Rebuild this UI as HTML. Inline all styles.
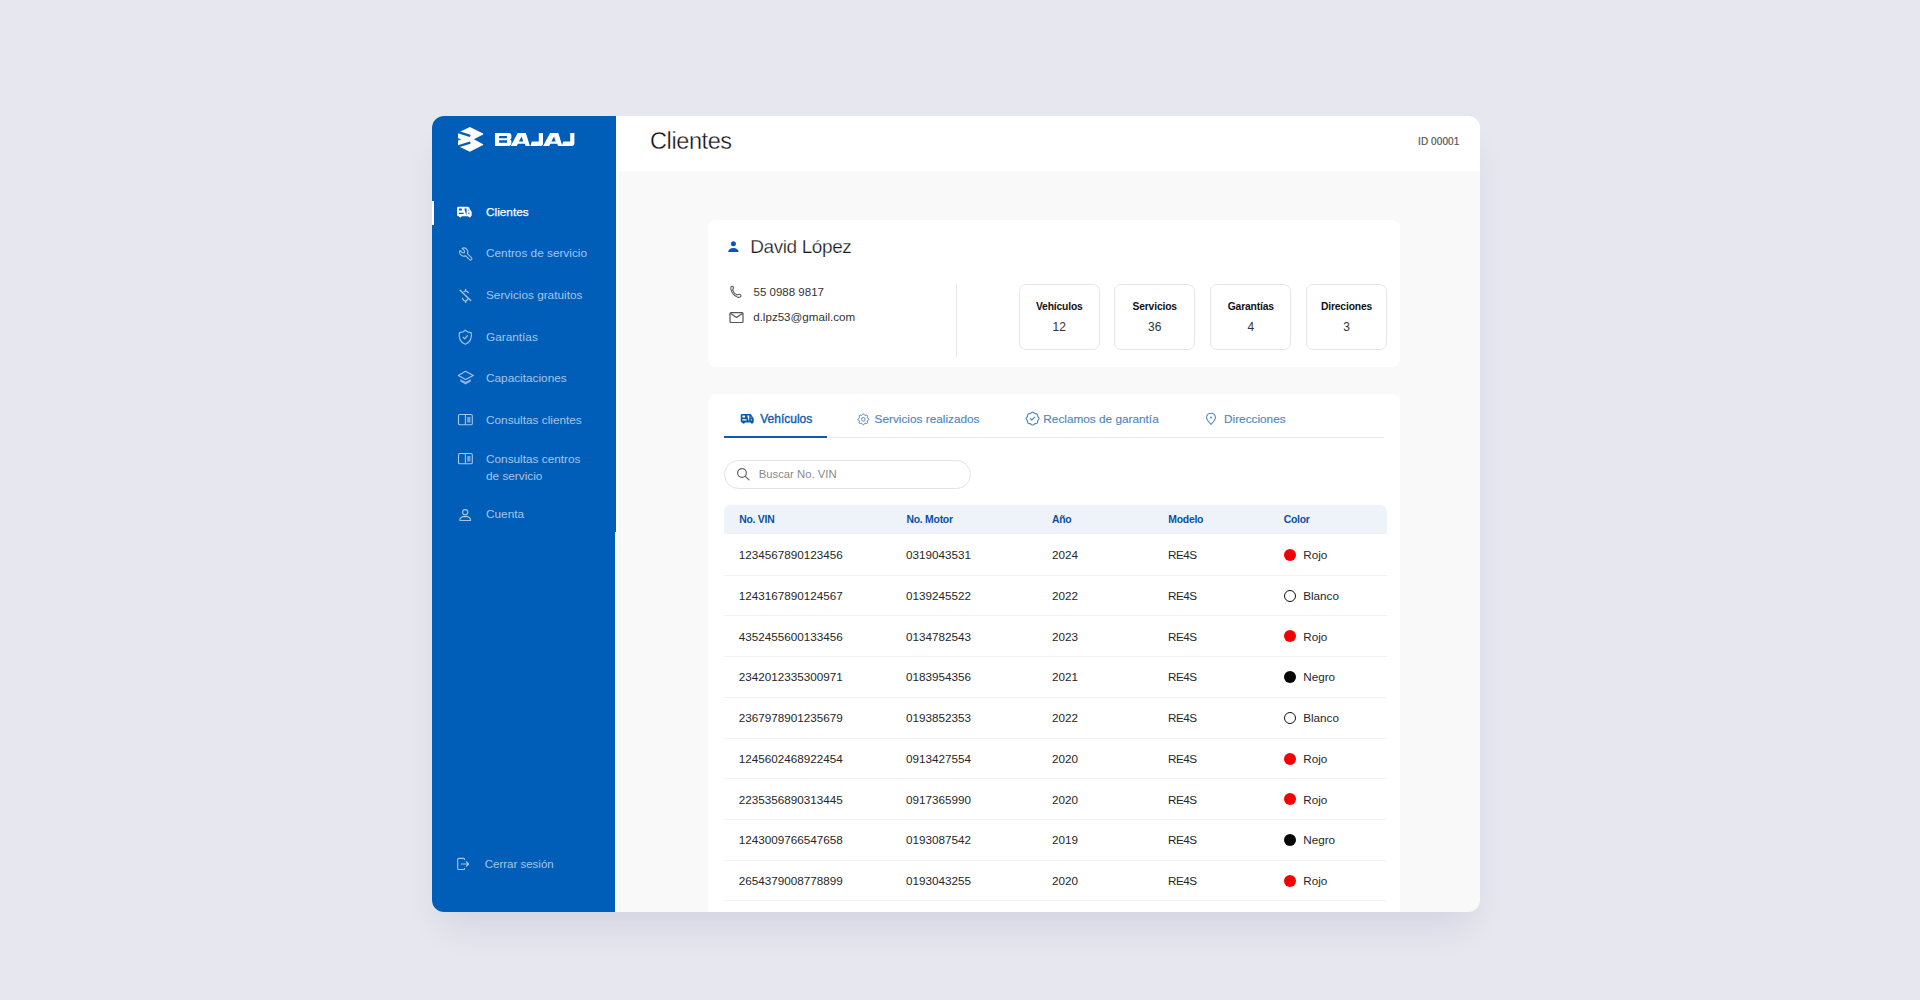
<!DOCTYPE html>
<html><head><meta charset="utf-8">
<style>
*{margin:0;padding:0;box-sizing:border-box}
html,body{width:1920px;height:1000px;overflow:hidden}
body{background:#e7e7ef;font-family:"Liberation Sans",sans-serif;position:relative;color:#222}
.abs{position:absolute}
.shadow{position:absolute;left:432px;top:116px;width:1048px;height:796px;border-radius:12px;box-shadow:0 22px 36px -10px rgba(40,40,90,0.105)}
.frame{position:absolute;left:432px;top:116px;width:1048px;height:796px;border-radius:12px;overflow:hidden;background:#f9f9f9}
.side{position:absolute;left:0;top:0;width:183px;height:796px;background:#005eb8}
.side:before{content:"";position:absolute;left:183px;top:0;width:1px;height:416px;background:#005eb8}
.hdr{position:absolute;left:184px;top:0;width:864px;height:55.2px;background:#fff}
.t{position:absolute;white-space:nowrap;line-height:1}
.nav{color:#a6c5e8;font-size:12px}
.card{position:absolute;background:#fff;border-radius:8px}
.stat{position:absolute;top:64px;width:81px;height:66px;border:1px solid #e6e6e9;border-radius:7px;text-align:center}
.stat b{position:absolute;left:0;right:0;top:16.9px;font-size:10.3px;letter-spacing:-0.15px;color:#111;line-height:1}
.stat span{position:absolute;left:0;right:0;top:36.4px;font-size:12px;color:#333;line-height:1}
.tab{color:#4f86bf;font-size:11.8px;-webkit-text-stroke:0.15px #4f86bf}
.th{position:absolute;font-size:10.4px;letter-spacing:-0.25px;font-weight:bold;color:#0b4fa3;line-height:1;white-space:nowrap}
.row{position:absolute;left:16px;width:663px;height:41px;border-bottom:1px solid #efefef}
.rt{font-size:11.7px;color:#262626}
.dot{position:absolute;top:14px;width:12px;height:12px;border-radius:50%}
svg{position:absolute;overflow:visible}
</style></head><body>
<div class="shadow"></div>
<div class="frame">
  <div class="abs" style="left:183px;top:0;width:2.5px;height:796px;background:#fff"></div>
  <div class="side">
    <svg style="left:22px;top:8px" width="34" height="32" viewBox="0 0 34 32">
      <polygon fill="#fff" points="15.85,2.88 29.13,9.6 29.13,10.4 19.85,15.37 29.13,20.3 29.13,21.1 15.85,27.7 8,24 4,22.1 4,16.5 7.4,15.37 4,14.2 4,8.64 8,6.72"/>
      <path d="M3.5,7.9 L15.4,11.7 M3.5,22.5 L15.4,18.8" stroke="#005eb8" stroke-width="2.3" fill="none" stroke-linecap="round"/>
    </svg>
    <svg style="left:62.9px;top:16.9px" width="80" height="13" viewBox="0 0 80 13">
      <path fill="#fff" fill-rule="evenodd" d="M0,0 H13.6 Q16.4,0 16.4,2.8 V4.6 Q16.4,6 15.2,6.45 Q16.4,6.9 16.4,8.3 V10.1 Q16.4,12.9 13.6,12.9 H0 Z M4.1,3 V5.2 H12 V3 Z M4.1,7.2 V9.7 H12 V7.2 Z"/>
      <path fill="#fff" fill-rule="evenodd" d="M15.7,12.9 L22.7,0 H30.9 L34.9,12.9 H30.6 L29.9,10.7 H22.9 L21.8,12.9 Z M23.9,8.6 L26.6,3.6 L28.3,8.6 Z"/>
      <path fill="#fff" d="M43.8,0 H48 V10.3 Q48,12.9 45.4,12.9 H35.4 L36.8,8.6 H43.8 Z"/>
      <path fill="#fff" fill-rule="evenodd" transform="translate(32.4,0)" d="M15.7,12.9 L22.7,0 H30.9 L34.9,12.9 H30.6 L29.9,10.7 H22.9 L21.8,12.9 Z M23.9,8.6 L26.6,3.6 L28.3,8.6 Z"/>
      <path fill="#fff" transform="translate(31.4,0)" d="M43.8,0 H48 V10.3 Q48,12.9 45.4,12.9 H35.4 L36.8,8.6 H43.8 Z"/>
    </svg>
    <div class="abs" style="left:0;top:85px;width:2px;height:24px;background:#fff"></div>
    <svg style="left:22px;top:84px" width="22" height="22" viewBox="0 0 22 22">
      <path fill="#fff" d="M3.1,8.1 Q3.1,6.8 4.4,6.8 H14 Q14.4,6.8 14.7,7.2 L17.4,11.6 Q17.7,12.1 17.7,12.6 V15 Q17.7,16.2 16.5,16.2 H4.3 Q3.1,16.2 3.1,15 Z"/>
      <circle cx="6.3" cy="16.1" r="1.45" fill="#fff"/><circle cx="15.7" cy="16.1" r="1.45" fill="#fff"/>
      <path fill="#005eb8" d="M5.3,8.5 H7.6 Q7.9,8.5 7.9,8.8 V10.3 Q7.9,10.6 7.6,10.6 H5.3 Q4.9,10.6 4.9,10.3 V8.8 Q4.9,8.5 5.3,8.5 Z M4.9,12.7 H9.6 V14.1 H4.9 Z M10.3,8.4 H12.7 L12.5,14.4 H12.1 Z M14.2,9.7 h0.9 v1 h-0.9z M14.4,12.6 h1 v1.3 h-1z"/>
    </svg>
    <div class="t" style="left:54px;top:91px;font-size:11.8px;color:#fff;-webkit-text-stroke:0.25px #fff">Clientes</div>
    <svg style="left:22.5px;top:126.6px" width="24" height="24" viewBox="0 0 24 24">
      <path d="M7 10h3v-3l-3.5 -3.5a6 6 0 0 1 8 8l6 6a2 2 0 0 1 -3 3l-6 -6a6 6 0 0 1 -8 -8l3.5 3.5" fill="none" stroke="#a6c5e8" stroke-width="1.55" stroke-linecap="round" stroke-linejoin="round" transform="translate(2.7,3.0) scale(0.67)"/>
    </svg>
    <div class="t nav" style="left:54px;top:132.4px;font-size:11.8px">Centros de servicio</div>
    <svg style="left:22px;top:168px" width="24" height="24" viewBox="0 0 24 24">
      <path d="M6.1,6.3 L16.7,16.5 M14.3,8.7 Q13.5,7.1 11.6,7.1 Q10.7,7.1 10.1,7.6 M11.6,5.3 V7.1 M8.5,14.4 Q9.6,17.1 11.6,17.1 Q12.9,17.1 13.5,15.3 M11.6,17.1 V18.4" fill="none" stroke="#a6c5e8" stroke-width="1.35" stroke-linecap="round"/>
    </svg>
    <div class="t nav" style="left:54px;top:174.2px;font-size:11.8px">Servicios gratuitos</div>
    <svg style="left:24.9px;top:212.3px" width="16.6" height="18.6" viewBox="0 0 24 24" preserveAspectRatio="none">
      <path d="M12 3a12 12 0 0 0 8.5 3a12 12 0 0 1 -8.5 15a12 12 0 0 1 -8.5 -15a12 12 0 0 0 8.5 -3 M9 12l2 2l4 -4" fill="none" stroke="#a6c5e8" stroke-width="1.6" stroke-linecap="round" stroke-linejoin="round"/>
    </svg>
    <div class="t nav" style="left:54px;top:215.8px;font-size:11.8px">Garantías</div>
    <svg style="left:22px;top:250px" width="24" height="24" viewBox="0 0 24 24">
      <path d="M4.3,9.5 L11.6,5.3 L19.3,9.5 L11.6,13.4 Z" fill="none" stroke="#a6c5e8" stroke-width="1.1" stroke-linejoin="round"/>
      <path d="M6.3,13.2 V15.6 L11.6,18.6 L16.8,15.6 V13.2 L11.6,15.8 Z" fill="#a6c5e8" opacity="0.85"/>
    </svg>
    <div class="t nav" style="left:54px;top:257.4px;font-size:11.8px">Capacitaciones</div>
    <svg style="left:22px;top:292px" width="24" height="24" viewBox="0 0 24 24">
      <rect x="4.5" y="6.5" width="13.8" height="10.3" rx="1.3" fill="none" stroke="#a6c5e8" stroke-width="1.1"/>
      <path d="M11.4,6.5 V16.8" stroke="#a6c5e8" stroke-width="1.1"/>
      <rect x="13.2" y="8.9" width="3.3" height="5.6" fill="#a6c5e8" opacity="0.7"/>
    </svg>
    <div class="t nav" style="left:54px;top:298.6px;font-size:11.8px">Consultas clientes</div>
    <svg style="left:22px;top:331px" width="24" height="24" viewBox="0 0 24 24">
      <rect x="4.5" y="6.5" width="13.8" height="10.3" rx="1.3" fill="none" stroke="#a6c5e8" stroke-width="1.1"/>
      <path d="M11.4,6.5 V16.8" stroke="#a6c5e8" stroke-width="1.1"/>
      <rect x="13.2" y="8.9" width="3.3" height="5.6" fill="#a6c5e8" opacity="0.7"/>
    </svg>
    <div class="t nav" style="left:54px;top:334.6px;font-size:11.8px;line-height:17px">Consultas centros<br>de servicio</div>
    <svg style="left:22px;top:388px" width="24" height="24" viewBox="0 0 24 24">
      <circle cx="11.2" cy="8.2" r="2.6" fill="none" stroke="#a6c5e8" stroke-width="1.1"/>
      <path d="M5.8,16.2 Q5.9,12.5 11.2,12.4 Q16.5,12.5 16.6,16.2 Q16.6,16.5 16.3,16.5 H6.1 Q5.8,16.5 5.8,16.2 Z" fill="none" stroke="#a6c5e8" stroke-width="1.1" stroke-linejoin="round"/>
    </svg>
    <div class="t nav" style="left:54px;top:393.4px;font-size:11.8px">Cuenta</div>
    <svg style="left:22px;top:737px" width="24" height="24" viewBox="0 0 24 24">
      <path d="M10.6,6.9 V6.5 Q10.6,5.4 9.5,5.4 H4.8 Q3.7,5.4 3.7,6.5 V15.4 Q3.7,16.5 4.8,16.5 H9.5 Q10.6,16.5 10.6,15.4 V15" fill="none" stroke="#a6c5e8" stroke-width="1.1"/>
      <path d="M7.4,11 H14.4 M12.3,8.8 L14.6,11 L12.3,13.2" fill="none" stroke="#a6c5e8" stroke-width="1.2" stroke-linejoin="round" stroke-linecap="round"/>
    </svg>
    <div class="t nav" style="left:52.7px;top:742.5px;font-size:11.5px">Cerrar sesión</div>
  </div>

  <div class="card" style="left:276px;top:104px;width:692px;height:147px">
    <svg style="left:19px;top:19px" width="14" height="14" viewBox="0 0 14 14">
      <circle cx="6.4" cy="4.84" r="2.5" fill="#0a55b5"/>
      <path d="M1.2,12.9 Q1.1,11.3 2.6,10.3 Q4,9.1 6.4,9 Q8.8,9.1 10.2,10.3 Q11.7,11.3 11.6,12.9 Z" fill="#0a55b5"/>
    </svg>
    <div class="t" style="left:42.2px;top:16.7px;font-size:19px;letter-spacing:-0.4px;color:#1a1a1a;-webkit-text-stroke:0.25px #fff">David López</div>
    <svg style="left:16px;top:60px" width="24" height="24" viewBox="0 0 24 24">
      <path d="M6.9,7.3 Q7.5,5.9 8.9,6.5 Q9.9,7.1 9.3,8.6 L8.6,10 Q9.8,13.4 13,15 L14.3,14.5 Q15.9,14 16.8,15 Q17.5,16.3 16.1,17.1 Q14.4,17.7 12.9,16.9 Q8.1,14.4 7,9.6 Q6.7,8.3 6.9,7.3 Z" fill="none" stroke="#555" stroke-width="1.05" stroke-linejoin="round"/>
    </svg>
    <div class="t" style="left:45.6px;top:67.1px;font-size:11.5px;color:#333">55 0988 9817</div>
    <svg style="left:20px;top:89px" width="18" height="18" viewBox="0 0 18 18">
      <rect x="2" y="3.6" width="13" height="9.9" rx="1" fill="none" stroke="#555" stroke-width="1.2"/>
      <path d="M2.3,4.2 L8.5,8.6 L14.7,4.2" fill="none" stroke="#555" stroke-width="1.2"/>
    </svg>
    <div class="t" style="left:45.2px;top:91.3px;font-size:11.6px;color:#333">d.lpz53@gmail.com</div>
    <div class="abs" style="left:247.5px;top:64px;width:1px;height:74px;background:#e8e8ea"></div>
    <div class="stat" style="left:310.8px"><b>Vehículos</b><span>12</span></div>
    <div class="stat" style="left:406.2px"><b>Servicios</b><span>36</span></div>
    <div class="stat" style="left:502.3px"><b>Garantías</b><span>4</span></div>
    <div class="stat" style="left:598px"><b>Direciones</b><span>3</span></div>
  </div>
  <div class="card" style="left:276px;top:277.5px;width:692px;height:620px">
    <svg style="left:30.2px;top:14.35px" width="19.6" height="19.6" viewBox="0 0 22 22">
      <path fill="#0a5bb5" d="M3.1,8.1 Q3.1,6.8 4.4,6.8 H14 Q14.4,6.8 14.7,7.2 L17.4,11.6 Q17.7,12.1 17.7,12.6 V15 Q17.7,16.2 16.5,16.2 H4.3 Q3.1,16.2 3.1,15 Z"/>
      <circle cx="6.3" cy="16.1" r="1.45" fill="#0a5bb5"/><circle cx="15.7" cy="16.1" r="1.45" fill="#0a5bb5"/>
      <path fill="#fff" d="M5.3,8.5 H7.6 Q7.9,8.5 7.9,8.8 V10.3 Q7.9,10.6 7.6,10.6 H5.3 Q4.9,10.6 4.9,10.3 V8.8 Q4.9,8.5 5.3,8.5 Z M4.9,12.7 H9.6 V14.1 H4.9 Z M10.3,8.4 H12.7 L12.5,14.4 H12.1 Z M14.2,9.7 h0.9 v1 h-0.9z M14.4,12.6 h1 v1.3 h-1z"/>
    </svg>
    <div class="t" style="left:52.2px;top:19.7px;font-size:12px;color:#0a5bb5;-webkit-text-stroke:0.35px #0a5bb5">Vehículos</div>
    <div class="abs" style="left:16px;top:43px;width:660px;height:1px;background:#ececee"></div>
    <div class="abs" style="left:15.7px;top:42.5px;width:103.3px;height:2px;background:#0a5bb5"></div>
    <svg style="left:148.3px;top:18.4px" width="14.7" height="14.7" viewBox="0 0 24 24">
      <path d="M10.325 4.317c.426 -1.756 2.924 -1.756 3.35 0a1.724 1.724 0 0 0 2.573 1.066c1.543 -.94 3.31 .826 2.37 2.37a1.724 1.724 0 0 0 1.065 2.572c1.756 .426 1.756 2.924 0 3.35a1.724 1.724 0 0 0 -1.066 2.573c.94 1.543 -.826 3.31 -2.37 2.37a1.724 1.724 0 0 0 -2.572 1.065c-.426 1.756 -2.924 1.756 -3.35 0a1.724 1.724 0 0 0 -2.573 -1.066c-1.543 .94 -3.31 -.826 -2.37 -2.37a1.724 1.724 0 0 0 -1.065 -2.572c-1.756 -.426 -1.756 -2.924 0 -3.35a1.724 1.724 0 0 0 1.066 -2.573c-.94 -1.543 .826 -3.31 2.37 -2.37c1 .608 2.296 .07 2.572 -1.065z M9 12a3 3 0 1 0 6 0a3 3 0 0 0 -6 0" fill="none" stroke="#4f86bf" stroke-width="1.6"/>
    </svg>
    <div class="t tab" style="left:166.6px;top:20.2px">Servicios realizados</div>
    <svg style="left:315.8px;top:16.8px" width="17.2" height="17.2" viewBox="0 0 24 24">
      <path d="M5 7.2a2.2 2.2 0 0 1 2.2 -2.2h1a2.2 2.2 0 0 0 1.55 -.64l.7 -.7a2.2 2.2 0 0 1 3.12 0l.7 .7c.412 .41 .97 .64 1.55 .64h1a2.2 2.2 0 0 1 2.2 2.2v1c0 .58 .23 1.138 .64 1.55l.7 .7a2.2 2.2 0 0 1 0 3.12l-.7 .7a2.2 2.2 0 0 0 -.64 1.55v1a2.2 2.2 0 0 1 -2.2 2.2h-1a2.2 2.2 0 0 0 -1.55 .64l-.7 .7a2.2 2.2 0 0 1 -3.12 0l-.7 -.7a2.2 2.2 0 0 0 -1.55 -.64h-1a2.2 2.2 0 0 1 -2.2 -2.2v-1a2.2 2.2 0 0 0 -.64 -1.55l-.7 -.7a2.2 2.2 0 0 1 0 -3.12l.7 -.7a2.2 2.2 0 0 0 .64 -1.55v-1 M9 12l2 2l4 -4" fill="none" stroke="#4f86bf" stroke-width="1.6" stroke-linecap="round" stroke-linejoin="round"/>
    </svg>
    <div class="t tab" style="left:335.3px;top:20.2px">Reclamos de garantía</div>
    <svg style="left:497.4px;top:18.5px" width="12" height="14" viewBox="0 0 12 14">
      <path d="M6,12.4 Q1.6,8 1.6,5.6 A4.4,4.4 0 0 1 10.4,5.6 Q10.4,8 6,12.4 Z" fill="none" stroke="#4f86bf" stroke-width="1.1" stroke-linejoin="round"/>
      <circle cx="6" cy="5.6" r="1" fill="#4f86bf"/>
    </svg>
    <div class="t tab" style="left:516px;top:20.2px">Direcciones</div>
    <div class="abs" style="left:16.2px;top:66.7px;width:246.5px;height:29.2px;border:1px solid #e3e3e6;border-radius:15px"></div>
    <svg style="left:22px;top:68.5px" width="26" height="24" viewBox="0 0 26 24">
      <circle cx="12" cy="11.04" r="4.4" fill="none" stroke="#666" stroke-width="1.2"/>
      <path d="M15.3,14.4 L19,17.9" stroke="#666" stroke-width="1.3" stroke-linecap="round"/>
    </svg>
    <div class="t" style="left:50.7px;top:75.9px;font-size:11.3px;color:#8a8a8a">Buscar No. VIN</div>
    <div class="abs" style="left:16px;top:111.3px;width:663px;height:29.2px;background:#eef3fa;border-radius:7px 7px 0 0">
      <div class="th" style="left:15.2px;top:9.9px">No. VIN</div>
      <div class="th" style="left:182.5px;top:9.9px">No. Motor</div>
      <div class="th" style="left:328px;top:9.9px">Año</div>
      <div class="th" style="left:444.3px;top:9.9px">Modelo</div>
      <div class="th" style="left:559.75px;top:9.9px">Color</div>
    </div>
<div class="t rt" style="left:30.8px;top:155.8px">1234567890123456</div><div class="t rt" style="left:198px;top:155.8px">0319043531</div><div class="t rt" style="left:344px;top:155.8px">2024</div><div class="t rt" style="left:460.1px;top:155.8px;letter-spacing:-0.55px">RE4S</div><div class="dot" style="left:575.6px;top:155.5px;background:#f50000"></div><div class="t rt" style="left:595.2px;top:155.8px">Rojo</div><div class="abs" style="left:16px;top:181.2px;width:663px;height:1px;background:#f1f1f3"></div>
<div class="t rt" style="left:30.8px;top:196.5px">1243167890124567</div><div class="t rt" style="left:198px;top:196.5px">0139245522</div><div class="t rt" style="left:344px;top:196.5px">2022</div><div class="t rt" style="left:460.1px;top:196.5px;letter-spacing:-0.55px">RE4S</div><div class="dot" style="left:575.6px;top:196.2px;background:#fff;border:1.3px solid #111"></div><div class="t rt" style="left:595.2px;top:196.5px">Blanco</div><div class="abs" style="left:16px;top:221.9px;width:663px;height:1px;background:#f1f1f3"></div>
<div class="t rt" style="left:30.8px;top:237.2px">4352455600133456</div><div class="t rt" style="left:198px;top:237.2px">0134782543</div><div class="t rt" style="left:344px;top:237.2px">2023</div><div class="t rt" style="left:460.1px;top:237.2px;letter-spacing:-0.55px">RE4S</div><div class="dot" style="left:575.6px;top:236.9px;background:#f50000"></div><div class="t rt" style="left:595.2px;top:237.2px">Rojo</div><div class="abs" style="left:16px;top:262.6px;width:663px;height:1px;background:#f1f1f3"></div>
<div class="t rt" style="left:30.8px;top:277.9px">2342012335300971</div><div class="t rt" style="left:198px;top:277.9px">0183954356</div><div class="t rt" style="left:344px;top:277.9px">2021</div><div class="t rt" style="left:460.1px;top:277.9px;letter-spacing:-0.55px">RE4S</div><div class="dot" style="left:575.6px;top:277.6px;background:#050505"></div><div class="t rt" style="left:595.2px;top:277.9px">Negro</div><div class="abs" style="left:16px;top:303.3px;width:663px;height:1px;background:#f1f1f3"></div>
<div class="t rt" style="left:30.8px;top:318.6px">2367978901235679</div><div class="t rt" style="left:198px;top:318.6px">0193852353</div><div class="t rt" style="left:344px;top:318.6px">2022</div><div class="t rt" style="left:460.1px;top:318.6px;letter-spacing:-0.55px">RE4S</div><div class="dot" style="left:575.6px;top:318.3px;background:#fff;border:1.3px solid #111"></div><div class="t rt" style="left:595.2px;top:318.6px">Blanco</div><div class="abs" style="left:16px;top:344.0px;width:663px;height:1px;background:#f1f1f3"></div>
<div class="t rt" style="left:30.8px;top:359.3px">1245602468922454</div><div class="t rt" style="left:198px;top:359.3px">0913427554</div><div class="t rt" style="left:344px;top:359.3px">2020</div><div class="t rt" style="left:460.1px;top:359.3px;letter-spacing:-0.55px">RE4S</div><div class="dot" style="left:575.6px;top:359.0px;background:#f50000"></div><div class="t rt" style="left:595.2px;top:359.3px">Rojo</div><div class="abs" style="left:16px;top:384.7px;width:663px;height:1px;background:#f1f1f3"></div>
<div class="t rt" style="left:30.8px;top:400.0px">2235356890313445</div><div class="t rt" style="left:198px;top:400.0px">0917365990</div><div class="t rt" style="left:344px;top:400.0px">2020</div><div class="t rt" style="left:460.1px;top:400.0px;letter-spacing:-0.55px">RE4S</div><div class="dot" style="left:575.6px;top:399.7px;background:#f50000"></div><div class="t rt" style="left:595.2px;top:400.0px">Rojo</div><div class="abs" style="left:16px;top:425.4px;width:663px;height:1px;background:#f1f1f3"></div>
<div class="t rt" style="left:30.8px;top:440.7px">1243009766547658</div><div class="t rt" style="left:198px;top:440.7px">0193087542</div><div class="t rt" style="left:344px;top:440.7px">2019</div><div class="t rt" style="left:460.1px;top:440.7px;letter-spacing:-0.55px">RE4S</div><div class="dot" style="left:575.6px;top:440.4px;background:#050505"></div><div class="t rt" style="left:595.2px;top:440.7px">Negro</div><div class="abs" style="left:16px;top:466.1px;width:663px;height:1px;background:#f1f1f3"></div>
<div class="t rt" style="left:30.8px;top:481.4px">2654379008778899</div><div class="t rt" style="left:198px;top:481.4px">0193043255</div><div class="t rt" style="left:344px;top:481.4px">2020</div><div class="t rt" style="left:460.1px;top:481.4px;letter-spacing:-0.55px">RE4S</div><div class="dot" style="left:575.6px;top:481.1px;background:#f50000"></div><div class="t rt" style="left:595.2px;top:481.4px">Rojo</div><div class="abs" style="left:16px;top:506.8px;width:663px;height:1px;background:#f1f1f3"></div>
  </div>
  <div class="hdr">
    <div class="t" style="left:34px;top:14.2px;font-size:23.5px;color:#111;letter-spacing:-0.4px;-webkit-text-stroke:0.35px #fff">Clientes</div>
    <div class="t" style="left:802px;top:21px;font-size:10px;color:#555;-webkit-text-stroke:0.2px #555;letter-spacing:0.1px">ID 00001</div>
  </div>
</div>
</body></html>
